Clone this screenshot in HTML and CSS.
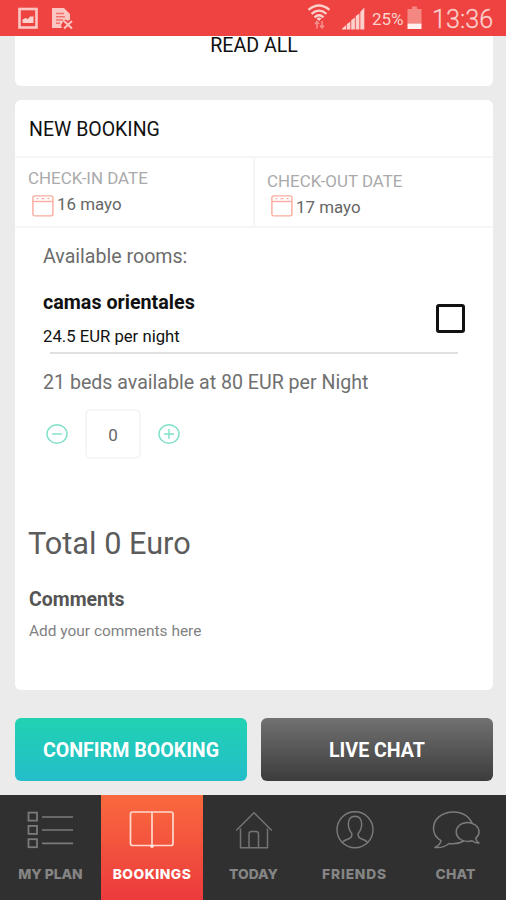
FILE: index.html
```
<!DOCTYPE html>
<html lang="en">
<head>
<meta charset="utf-8">
<title>Bookings</title>
<link rel="stylesheet" href="styles.css">
</head>
<body>
<div class="app">
  <header class="status">
    <svg class="status-left" width="60" height="36" viewBox="0 0 60 36">
      <rect x="3.500" y="9" width="17" height="18.500" fill="none" stroke="#fbc5c2" stroke-width="2.600"/>
      <path d="M6.500 23v-3.500l3-1.500 2.500 1 2.500-3 1.500 1 1.500-1.500V23z" fill="#fbd0cd"/>
      <path d="M36 8h12l6 6v6l-7 2-2 3 1 3H36z" fill="#fbc5c2"/>
      <path d="M40 13.500h8M40 16.800h9M40 20h7M40 23.200h4" stroke="#f0726d" stroke-width="1.400"/>
      <path d="M48 21l8 7.500M56 21l-8 7.500" stroke="#ee4340" stroke-width="4.500"/>
      <path d="M48 21l8 7.500M56 21l-8 7.500" stroke="#fbc5c2" stroke-width="2"/>
    </svg>
    <div class="status-right">
      <svg width="62" height="36" viewBox="0 0 62 36">
        <g fill="none" stroke="#fbd0cd" stroke-width="2.300">
          <path d="M1.500 9.800q10.500-8.600 21 0"/>
          <path d="M4.500 13.800q7.500-6.300 15 0"/>
          <path d="M7.500 17.300q4.500-4 9 0"/>
        </g>
        <path d="M9.500 18.500q2.500-2 5 0l-2.500 2.500z" fill="#fbd0cd"/>
        <path d="M10 22v6.500M8 24l2-2.500 2 2.500M15 21v6M13 25.500l2 2.500 2-2.500" fill="none" stroke="#f58e8a" stroke-width="1.600"/>
        <g fill="#fbd0cd">
          <path d="M35 29.500v-1l4-3.200v4.200zM39.700 29.500v-5.200l3.700-2.700v7.900zM44.200 29.500v-9.300l3.700-2.700v12zM48.700 29.500v-13.400l3.700-2.700v16.100zM53.300 29.500V12l4-4.500v22z"/>
        </g>
      </svg>
      <span class="percent">25%</span>
      <svg class="battery" width="15" height="36" viewBox="0 0 15 36">
        <path d="M5 6.500h5V9h4.500v14.500H.5V9H5z" fill="#f58783"/>
        <path d="M.5 23.500h14V29H.5z" fill="#fff1ef"/>
      </svg>
      <span class="clock">13:36</span>
    </div>
  </header>

  <main class="content">
    <section class="card reviews"><a class="read-all">READ ALL</a></section>

    <section class="card booking">
      <h2 class="card-title">NEW BOOKING</h2>
      <div class="dates">
        <div class="date">
          <div class="date-label">CHECK-IN DATE</div>
          <div class="date-value">
            <svg width="22" height="22" viewBox="0 0 22 22"><g fill="none" stroke="#fbab9f" stroke-width="1.400"><rect x=".9" y=".9" width="20" height="20" rx="1.800"/><path d="M1 6.500h20"/><path d="M4.500 3.600h2M9.500 3.600h3M15.500 3.600h2"/></g></svg>
            <span>16 mayo</span>
          </div>
        </div>
        <div class="date date-out">
          <div class="date-label">CHECK-OUT DATE</div>
          <div class="date-value">
            <svg width="22" height="22" viewBox="0 0 22 22"><g fill="none" stroke="#fbab9f" stroke-width="1.400"><rect x=".9" y=".9" width="20" height="20" rx="1.800"/><path d="M1 6.500h20"/><path d="M4.500 3.600h2M9.500 3.600h3M15.500 3.600h2"/></g></svg>
            <span>17 mayo</span>
          </div>
        </div>
      </div>

      <div class="rooms">
        <p class="rooms-title">Available rooms:</p>
        <div class="room">
          <div>
            <h3 class="room-name">camas orientales</h3>
            <p class="room-price">24.5 EUR per night</p>
          </div>
          <span class="checkbox"></span>
        </div>
        <div class="divider"></div>
        <p class="beds">21 beds available at 80 EUR per Night</p>
        <div class="stepper">
          <svg width="22" height="22" viewBox="0 0 22 22"><g fill="none" stroke="#7fe0c8" stroke-width="1.400"><ellipse cx="11" cy="11" rx="10" ry="9.300"/><path d="M6 11h10"/></g></svg>
          <span class="count">0</span>
          <svg width="22" height="22" viewBox="0 0 22 22"><g fill="none" stroke="#7fe0c8" stroke-width="1.400"><ellipse cx="11" cy="11" rx="10" ry="9.300"/><path d="M6 11h10M11 6v10"/></g></svg>
        </div>
      </div>

      <p class="total">Total 0 Euro</p>
      <h3 class="comments">Comments</h3>
      <p class="placeholder">Add your comments here</p>
    </section>

    <div class="actions">
      <a class="button confirm">CONFIRM BOOKING</a>
      <a class="button chat">LIVE CHAT</a>
    </div>
  </main>

  <nav class="tabs">
    <a class="tab plan">
      <svg width="50" height="40" viewBox="0 0 50 40"><g fill="none" stroke="#7b7b7b"><g stroke-width="1.800"><rect x="2.500" y="2.600" width="8.500" height="8"/><rect x="2.500" y="15.900" width="8.500" height="8"/><rect x="2.500" y="29.200" width="8.500" height="8"/></g><path d="M16 7h31M16 20h31M16 33.400h31" stroke-width="1.600"/></g></svg>
      <span>MY PLAN</span>
    </a>
    <a class="tab active bookings">
      <svg width="50" height="40" viewBox="0 0 50 40"><g fill="none" stroke="#ffd9cd" stroke-width="1.700"><rect x="3.500" y="2" width="42.500" height="33.500" rx="2"/><path d="M25 2v35"/></g><circle cx="25" cy="36.300" r="1.800" fill="#ffe6de"/></svg>
      <span>BOOKINGS</span>
    </a>
    <a class="tab today">
      <svg width="50" height="40" viewBox="0 0 50 40"><g fill="none" stroke="#747474" stroke-width="1.500"><path d="M7.200 20.500L25 2.800 42.800 20.500"/><path d="M11.500 18.500v19.300H38.500V18.500"/><path d="M20 37.800V24q0-2.500 2.500-2.500h4.500q2.500 0 2.500 2.500v13.800"/></g></svg>
      <span>TODAY</span>
    </a>
    <a class="tab friends">
      <svg width="50" height="40" viewBox="0 0 50 40"><g fill="none" stroke="#7b7b7b" stroke-width="1.400"><circle cx="25" cy="19.800" r="18"/><path d="M12.200 32.500q2-2.300 6-3.500 4-1.200 3.700-5.500-3.300-3.500-3.600-9.500.3-7.500 6.700-7.700 6.400.2 6.700 7.700-.3 6-3.600 9.500-.3 4.300 3.700 5.500 4 1.200 6 3.500"/></g></svg>
      <span>FRIENDS</span>
    </a>
    <a class="tab talk">
      <svg width="50" height="40" viewBox="0 0 50 40"><g fill="none" stroke="#7b7b7b" stroke-width="1.500" stroke-linejoin="round"><path d="M41 13.500C38.500 6.500 31.500 2 22.500 2 11 2 2.500 9 2.500 18.500c0 5.500 3 9.500 7.500 12.200-.5 3-2.500 5-6 6.800 6 .5 10.500-1 14-4 6 .8 11-.3 15-2.500"/><path d="M36.500 12.500c-6.500 0-11.300 4.200-11.300 9.500s5 9.500 11.300 9.500c1.500 0 3-.2 4.500-.7 2 1.800 4 2.600 7 2.200-2-1.200-3-2.700-3.200-5 2-1.500 3.200-3.500 3.200-6 0-5.300-5-9.500-11.500-9.500z"/></g></svg>
      <span>CHAT</span>
    </a>
  </nav>
</div>
</body>
</html>
```
FILE: styles.css
```
* { box-sizing: border-box; }

body, h2, h3, p { margin: 0; }

body {
  font-family: Roboto, "Liberation Sans", sans-serif;
  background: #ebebeb;
}

svg { display: block; flex: none; }

.app {
  width: 506px;
  height: 900px;
  display: flex;
  flex-direction: column;
  overflow: hidden;
}

.status {
  height: 36px;
  flex: none;
  display: flex;
  justify-content: space-between;
  background: #ee4340;
  color: #fbd0cd;
  padding: 0 12px 0 16px;
}

.status-right { display: flex; line-height: 38px; }
.percent { width: 35px; margin-left: 3px; font-size: 17px; }
.battery { margin-right: 10px; }
.clock { font-size: 25.200px; font-weight: 300; width: 62px; line-height: 39px; -webkit-text-stroke: .3px #fbd0cd; }

.content { flex: 1; padding: 0 13px 0 15px; }

.card { background: #fff; }

.reviews {
  height: 50px;
  border-radius: 0 0 6px 6px;
  text-align: center;
}

.read-all { font-size: 19.600px; line-height: 19px; display: block; color: #111; }

.booking {
  height: 590px;
  margin-top: 14px;
  border-radius: 6px;
}

.card-title {
  height: 56px;
  padding-left: 14px;
  font-size: 19.500px;
  font-weight: 400;
  line-height: 59px;
  color: #111;
}

.dates {
  display: flex;
  height: 72px;
  border-top: 2px solid #f6f6f6;
  border-bottom: 2px solid #f6f6f6;
}

.date { width: 238px; padding: 9px 0 0 13px; }
.date-out { width: 240px; border-left: 2px solid #f6f6f6; padding: 12px 0 0 12px; }
.date-label { font-size: 16.900px; line-height: 22px; color: #aaa; }
.date-value { display: flex; gap: 3px; padding-left: 4px; font-size: 16.900px; line-height: 30px; color: #666; }
.date-value svg { margin-top: 6px; }
.date-out .date-value svg { margin-top: 3px; }

.rooms { height: 232px; padding: 16px 28px 0 28px; }
.rooms-title { font-size: 19.600px; line-height: 25px; color: #6c6c6c; }
.room { display: flex; justify-content: space-between; padding-top: 20px; }
.room-name { font-size: 19.700px; line-height: 27px; color: #111; }
.room-price { margin-top: 9px; font-size: 16.700px; line-height: 24px; color: #111; }
.checkbox { width: 29px; height: 29px; margin-top: 15px; border: 3px solid #111; border-radius: 3px; }
.divider { height: 2px; margin: 3px 7px 0 7px; background: #e1e1e1; }
.beds { margin-top: 16px; font-size: 19.600px; line-height: 26px; color: #707070; }
.stepper { display: flex; align-items: center; gap: 17px; margin-top: 13px; padding-left: 3px; }
.count {
  width: 56px;
  height: 50px;
  border: 2px solid #f5f5f5;
  border-radius: 6px;
  text-align: center;
  font-size: 17px;
  line-height: 49px;
  color: #666;
}

.total { margin-top: 64px; padding-left: 13px; font-size: 30.700px; line-height: 40px; color: #5c5c5c; }
.comments { margin-top: 23px; padding-left: 14px; font-size: 19.500px; line-height: 26px; color: #555; }
.placeholder { margin-top: 6px; padding-left: 14px; font-size: 15.450px; line-height: 24px; color: #828282; }

.actions { display: flex; gap: 14px; margin-top: 28px; }
.button {
  width: 232px;
  height: 63px;
  border-radius: 6px;
  text-align: center;
  font-size: 19.600px;
  font-weight: 700;
  line-height: 66px;
  color: #fff;
}
.confirm { background: linear-gradient(#20d2b2, #24bdca); }
.chat { background: linear-gradient(#717171, #3c3c3c); }

.tabs {
  height: 105px;
  flex: none;
  display: grid;
  grid-template-columns: 101px 102px repeat(3, 101px);
  background: #303030;
  color: #858585;
}
.tab {
  display: flex;
  flex-direction: column;
  align-items: center;
  padding-top: 15px;
  font-family: Inter, "Liberation Sans", sans-serif;
  font-size: 13.800px;
  font-weight: 800;
}
.tab span { margin-top: 14px; line-height: 21px; }
.active { background: linear-gradient(#f96a3e, #ec3a3d); color: #fff; }
.bookings span { letter-spacing: .5px; }
.friends span { letter-spacing: .8px; }
.talk span { letter-spacing: .2px; }
```
